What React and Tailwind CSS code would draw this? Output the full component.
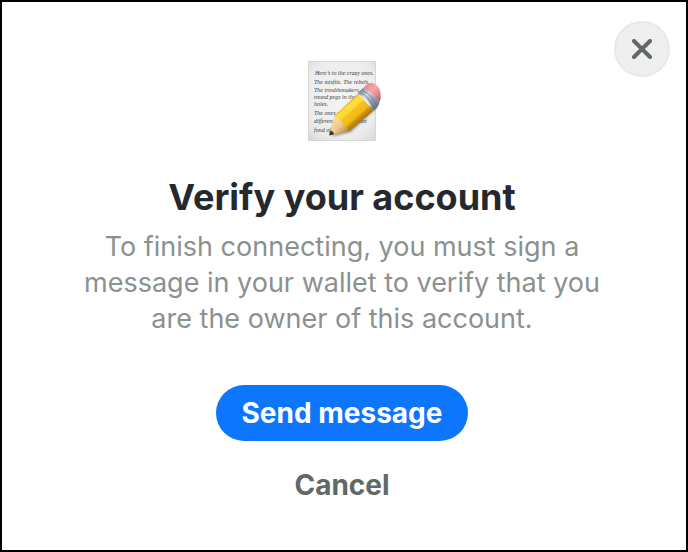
function MemoIcon() {
  return (
    <svg width="80" height="80" viewBox="-2 0 80 80" aria-hidden="true" className="shrink-0">
      <defs>
        <radialGradient id="paper" cx="0.5" cy="0.45" r="0.75">
          <stop offset="0" stopColor="#f5f5f5" />
          <stop offset="0.7" stopColor="#ececec" />
          <stop offset="1" stopColor="#d6d6d6" />
        </radialGradient>
        <linearGradient id="wood" x1="28" y1="57" x2="42" y2="72" gradientUnits="userSpaceOnUse">
          <stop offset="0" stopColor="#f9dfa4" />
          <stop offset="0.55" stopColor="#efc889" />
          <stop offset="1" stopColor="#b98a4c" />
        </linearGradient>
        <linearGradient id="barrel" x1="41" y1="44" x2="56" y2="61" gradientUnits="userSpaceOnUse">
          <stop offset="0" stopColor="#eab72a" />
          <stop offset="0.14" stopColor="#ffdf45" />
          <stop offset="0.36" stopColor="#ffd62c" />
          <stop offset="0.4" stopColor="#f6c21c" />
          <stop offset="0.72" stopColor="#f2b818" />
          <stop offset="0.77" stopColor="#d89a14" />
          <stop offset="1" stopColor="#a9760e" />
        </linearGradient>
        <linearGradient id="ferrule" x1="56" y1="31" x2="71" y2="48" gradientUnits="userSpaceOnUse">
          <stop offset="0" stopColor="#8f98a3" />
          <stop offset="0.3" stopColor="#d3dae1" />
          <stop offset="0.6" stopColor="#9ba8b5" />
          <stop offset="1" stopColor="#65707c" />
        </linearGradient>
        <linearGradient id="eraser" x1="62" y1="25" x2="75" y2="40" gradientUnits="userSpaceOnUse">
          <stop offset="0" stopColor="#e98c91" />
          <stop offset="0.35" stopColor="#f6a5a9" />
          <stop offset="0.7" stopColor="#ea858c" />
          <stop offset="1" stopColor="#bd5661" />
        </linearGradient>
        <filter id="shade" x="-20%" y="-20%" width="140%" height="140%">
          <feGaussianBlur stdDeviation="1.3" />
        </filter>
      </defs>
      <rect x="4.5" y="0.5" width="67" height="79" fill="url(#paper)" stroke="#cfcfcf" strokeWidth="0.8" />
      <g fill="#3a3a3a" fontFamily="'Liberation Serif', serif" fontStyle="italic" fontSize="6">
        <text x="11" y="14">Here’s to the crazy ones.</text>
        <text x="10" y="23">The misfits. The rebels.</text>
        <text x="10" y="31">The troublemakers. The</text>
        <text x="10" y="38">round pegs in the</text>
        <text x="10" y="45">holes.</text>
        <text x="10" y="54">The ones who</text>
        <text x="10" y="62">differently</text>
        <text x="55" y="62">not</text>
        <text x="10" y="71">fond of</text>
      </g>
      <path d="M27 76 47 71 74 46 70 42 40 64Z" fill="#000" opacity="0.35" filter="url(#shade)" />
      <path d="M25 74.5 30.5 54.5 Q34 53 36 57 Q40 58 39.5 62 Q44 63 44.5 70.5Z" fill="url(#wood)" />
      <path d="M25 74.5 26.4 69.4 Q29.4 70 30.2 73.2Z" fill="#333638" />
      <path d="M30 55 54 32.5 69.5 49.5 44.5 71 Q43.5 66 39.5 65 Q39.5 60 35.5 60 Q34 55 30 55Z" fill="url(#barrel)" />
      <path d="M54 33 Q53.5 31 60 26.5 Q72 31 75.5 42.5 Q71 49.5 69.5 49.5 Q65 38 54 33Z" fill="url(#ferrule)" />
      <path d="M55.5 31.2 Q66 35.5 71 47.8M57.5 29.2 Q68.5 33.5 73 45.4" fill="none" stroke="#63717e" strokeWidth="0.7" />
      <path d="M59.5 27.5 Q62 21.8 68.5 22 Q75 24.4 76.4 31 Q77.4 37 75.5 41.5 Q70 31.5 59.5 27.5Z" fill="url(#eraser)" />
    </svg>
  );
}

export default function App() {
  return (
    <div className="relative flex min-h-screen flex-col items-center border-2 border-black bg-white pt-[59px] pr-[68px] pb-6 pl-16 text-center font-['Inter',sans-serif]">
      <button
        type="button"
        aria-label="Close"
        className="absolute top-[19px] right-4 flex size-14 items-center justify-center rounded-full border-2 border-[#e8e8e8] bg-[#efefef] text-[#606868]"
      >
        <svg width="20" height="20" viewBox="0 0 20 20" fill="none" stroke="currentColor" strokeWidth="4" strokeLinecap="round" aria-hidden="true">
          <path d="m2 2 16 16M18 2 2 18" />
        </svg>
      </button>
      <MemoIcon />
      <h1 className="mt-8 text-[36px] leading-[48px] font-bold text-[#25292e]">Verify your account</h1>
      <p className="mt-2 max-w-[540px] text-[27px] leading-9 text-[#8b918f]">
        To finish connecting, you must sign a message in your wallet to verify that you are the owner of this account.
      </p>
      <button type="button" className="mt-12 h-14 rounded-full bg-[#0e76fd] px-[26px] text-[28px] leading-9 font-bold text-white">
        Send message
      </button>
      <button type="button" className="mt-4 h-14 px-[26px] text-[28px] leading-9 font-bold text-[#606868]">
        Cancel
      </button>
    </div>
  );
}
